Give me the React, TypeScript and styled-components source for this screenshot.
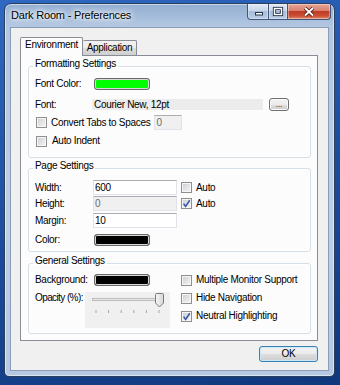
import React from "react";
import styled, { createGlobalStyle } from "styled-components";

const GlobalStyle = createGlobalStyle`
  html, body {
    margin: 0;
    padding: 0;
  }
  body {
    width: 340px;
    height: 385px;
    overflow: hidden;
    font-family: "Liberation Sans", Arial, sans-serif;
    font-size: 10px;
    letter-spacing: -0.3px;
    color: #000;
  }
`;

const Desktop = styled.div`
  width: 340px;
  height: 385px;
  box-sizing: border-box;
  padding: 3px 5px 8px 4px;
  display: flex;
  background: linear-gradient(165deg, #2f68c2 0%, #1d50a1 45%, #0f377c 100%);
`;

const Window = styled.div`
  flex: 1;
  display: flex;
  flex-direction: column;
  border: 1px solid #2b3f5f;
  border-radius: 7px 7px 5px 5px;
  padding: 0 5px 5px;
  overflow: hidden;
  background: linear-gradient(180deg, #93aed2 0px, #b2c7e1 22px, #bdcfe6 60%, #b5c9e2 100%);
  box-shadow: inset 0 0 0 1px rgba(255, 255, 255, 0.5);
`;

const TitleBar = styled.div`
  height: 23px;
  display: flex;
  justify-content: space-between;
  align-items: flex-start;
  margin-right: -2px;
`;

const Title = styled.div`
  padding: 5px 0 0 1px;
  font-size: 11px;
  line-height: 12px;
  letter-spacing: -0.2px;
  color: #000;
  text-shadow: 0 0 6px #fff, 0 0 3px #fff, 0 0 10px #fff;
`;

const CaptionGroup = styled.div`
  display: flex;
  height: 16px;
`;

const CaptionButton = styled.div<{ $w: number; $close?: boolean; $first?: boolean }>`
  width: ${(p) => p.$w}px;
  box-sizing: border-box;
  border: 1px solid #43567a;
  border-top: none;
  border-left: ${(p) => (p.$first ? "1px solid #43567a" : "none")};
  border-radius: ${(p) => (p.$first ? "0 0 0 4px" : p.$close ? "0 0 4px 0" : "0")};
  background: ${(p) =>
    p.$close
      ? "linear-gradient(180deg, #e8a698 0%, #d7806d 45%, #c23b26 50%, #cc4f34 80%, #e0926f 100%)"
      : "linear-gradient(180deg, #e2eaf4 0%, #c7d6e8 45%, #a8bedb 50%, #b9cde6 100%)"};
  box-shadow: inset 0 0 0 1px rgba(255, 255, 255, 0.35);
  svg {
    display: block;
  }
`;

const Client = styled.div`
  flex: 1;
  display: flex;
  flex-direction: column;
  background: #f0f0f0;
  border: 1px solid #8b9cb5;
  padding: 9px 10px 7px 9px;
`;

const TabStrip = styled.div`
  display: flex;
  align-items: flex-end;
  height: 19px;
  margin-bottom: -1px;
  position: relative;
  z-index: 1;
`;

const Tab = styled.div<{ $active?: boolean; $w: number }>`
  width: ${(p) => p.$w}px;
  box-sizing: border-box;
  height: ${(p) => (p.$active ? 19 : 15)}px;
  margin-bottom: ${(p) => (p.$active ? 0 : 1)}px;
  border: 1px solid #898c95;
  border-bottom: none;
  border-left: ${(p) => (p.$active ? "1px solid #898c95" : "none")};
  border-radius: 2px 2px 0 0;
  padding-top: 1px;
  line-height: 12px;
  text-align: center;
  background: ${(p) =>
    p.$active ? "#fcfcfc" : "linear-gradient(180deg, #f2f2f2 0%, #ebebeb 50%, #dddddd 51%, #cfcfcf 100%)"};
`;

const TabPanel = styled.div`
  border: 1px solid #898c95;
  background: #fcfcfc;
  padding: 2px 6px 6px 7px;
`;

const Group = styled.fieldset<{ $mt: number; $pb: number }>`
  margin: ${(p) => p.$mt}px 0 0;
  padding: 0 6px ${(p) => p.$pb}px 6px;
  border: 1px solid #d5dfe5;
  border-radius: 3px;
  box-shadow: inset 0 0 0 1px #ffffff;
  min-width: 0;
`;

const Legend = styled.legend`
  padding: 0 2px 4px;
  margin-left: -2px;
  line-height: 12px;
  font-size: 10px;
`;

const Row = styled.div<{ $h: number; $mt: number }>`
  display: flex;
  align-items: center;
  height: ${(p) => p.$h}px;
  margin-top: ${(p) => p.$mt}px;
`;

const Label = styled.span<{ $w?: number; $ml?: number; $tight?: boolean }>`
  flex: none;
  width: ${(p) => (p.$w ? `${p.$w}px` : "auto")};
  margin-left: ${(p) => p.$ml ?? 0}px;
  line-height: 12px;
  white-space: nowrap;
  letter-spacing: ${(p) => (p.$tight ? "-0.6px" : "inherit")};
`;

const Swatch = styled.div<{ $color: string }>`
  width: 56px;
  height: 12px;
  box-sizing: border-box;
  margin-left: 1px;
  border: 1px solid #6a6a6a;
  border-radius: 3px;
  background: ${(p) => p.$color};
  box-shadow: inset 0 0 0 1px #d8d8d8;
`;

const FontField = styled.div`
  width: 171px;
  height: 11px;
  margin-left: -1px;
  padding-left: 2px;
  box-sizing: border-box;
  background: #ececec;
  line-height: 11px;
`;

const SmallButton = styled.div`
  width: 20px;
  height: 13px;
  margin-left: 6px;
  box-sizing: border-box;
  border: 1px solid #707070;
  border-radius: 3px;
  background: linear-gradient(180deg, #f2f2f2 0%, #ebebeb 50%, #dddddd 51%, #cfcfcf 100%);
  box-shadow: inset 0 0 0 1px #fbfbfb;
  font-size: 8px;
  line-height: 12px;
  text-align: center;
  letter-spacing: 0;
`;

const TextInput = styled.div<{ $w: number; $disabled?: boolean; $ml?: number }>`
  width: ${(p) => p.$w}px;
  height: 15px;
  margin-left: ${(p) => p.$ml ?? 0}px;
  box-sizing: border-box;
  border: 1px solid #e2e3ea;
  border-top-color: #abadb3;
  padding-left: 1px;
  line-height: 13px;
  background: ${(p) => (p.$disabled ? "#f0f0f0" : "#ffffff")};
  color: ${(p) => (p.$disabled ? "#6d6d6d" : "#000")};
`;

const Box = styled.span<{ $ml?: number }>`
  flex: none;
  width: 11px;
  height: 11px;
  box-sizing: border-box;
  margin-left: ${(p) => p.$ml ?? 0}px;
  border: 1px solid #8f8f8f;
  background: linear-gradient(135deg, #c9ccd1 0%, #e6e7e9 60%, #f5f5f5 100%);
  box-shadow: inset 0 0 0 1px #f6f6f6;
  svg {
    display: block;
  }
`;

const Columns = styled.div`
  display: flex;
`;

const Column = styled.div<{ $w?: number; $ml?: number }>`
  width: ${(p) => (p.$w ? `${p.$w}px` : "auto")};
  margin-left: ${(p) => p.$ml ?? 0}px;
  display: flex;
  flex-direction: column;
`;

const TopRow = styled.div<{ $mt: number }>`
  display: flex;
  align-items: flex-start;
  margin-top: ${(p) => p.$mt}px;
`;

const SliderBox = styled.div`
  width: 85px;
  height: 36px;
  background: #f0f0f0;
  svg {
    display: block;
  }
`;

const Footer = styled.div`
  display: flex;
  justify-content: flex-end;
  padding-top: 5px;
`;

const OkButton = styled.div`
  width: 59px;
  height: 16px;
  box-sizing: border-box;
  border: 1px solid #3c7fb1;
  border-radius: 3px;
  background: linear-gradient(180deg, #f2f2f2 0%, #ebebeb 50%, #dddddd 51%, #cfcfcf 100%);
  box-shadow: inset 0 0 0 1px #c9e9f9;
  line-height: 14px;
  text-align: center;
`;

const Check: React.FC<{ checked?: boolean; ml?: number }> = ({ checked, ml }) => (
  <Box $ml={ml}>
    {checked && (
      <svg width="9" height="9" viewBox="0 0 9 9">
        <path d="M1.6 4.6 L3.6 7.4 L7.8 1.2" fill="none" stroke="#3a58a6" strokeWidth="1.6" />
      </svg>
    )}
  </Box>
);

const ticks = [11, 23.6, 36.2, 48.8, 61.4, 74];

const Slider: React.FC = () => (
  <SliderBox>
    <svg width="85" height="36" viewBox="0 0 85 36">
      <defs>
        <linearGradient id="thumb" x1="0" y1="0" x2="1" y2="0">
          <stop offset="0" stopColor="#f6f6f6" />
          <stop offset="1" stopColor="#d6d6d6" />
        </linearGradient>
      </defs>
      <rect x="7.5" y="6.5" width="67" height="2" fill="#e8e8e8" stroke="#bcbcbc" />
      {ticks.map((x) => (
        <line key={x} x1={x} y1="18" x2={x} y2="21" stroke="#a6a6a6" strokeWidth="1" />
      ))}
      <path
        d="M70.5 2.5 Q70.5 1.5 71.5 1.5 H77.5 Q78.5 1.5 78.5 2.5 V11 L74.5 15 L70.5 11 Z"
        fill="url(#thumb)"
        stroke="#7a7a7a"
      />
    </svg>
  </SliderBox>
);

export default function App() {
  return (
    <>
      <GlobalStyle />
      <Desktop>
        <Window>
          <TitleBar>
            <Title>Dark Room - Preferences</Title>
            <CaptionGroup>
              <CaptionButton $w={22} $first>
                <svg width="20" height="15" viewBox="0 0 20 15">
                  <rect x="7.5" y="8.5" width="7" height="2.5" fill="#fff" stroke="#26344d" />
                </svg>
              </CaptionButton>
              <CaptionButton $w={19}>
                <svg width="18" height="15" viewBox="0 0 18 15">
                  <rect x="5.5" y="4.5" width="7" height="6" fill="none" stroke="#26344d" strokeWidth="3.2" />
                  <rect x="5.5" y="4.5" width="7" height="6" fill="none" stroke="#fff" strokeWidth="1.4" />
                </svg>
              </CaptionButton>
              <CaptionButton $w={43} $close>
                <svg width="42" height="15" viewBox="0 0 42 15">
                  <path d="M17 4 L25 11.5 M25 4 L17 11.5" stroke="#4a1c16" strokeWidth="3.6" />
                  <path d="M17 4 L25 11.5 M25 4 L17 11.5" stroke="#fff" strokeWidth="1.8" />
                </svg>
              </CaptionButton>
            </CaptionGroup>
          </TitleBar>
          <Client>
            <TabStrip>
              <Tab $active $w={63}>Environment</Tab>
              <Tab $w={54}>Application</Tab>
            </TabStrip>
            <TabPanel>
              <Group $mt={0} $pb={9}>
                <Legend>Formatting Settings</Legend>
                <Row $h={14} $mt={3}>
                  <Label $w={58}>Font Color:</Label>
                  <Swatch $color="#00ff00" />
                </Row>
                <Row $h={15} $mt={6}>
                  <Label $w={58}>Font:</Label>
                  <FontField>Courier New, 12pt</FontField>
                  <SmallButton>...</SmallButton>
                </Row>
                <Row $h={15} $mt={3}>
                  <Check ml={1} />
                  <Label $ml={4}>Convert Tabs to Spaces</Label>
                  <TextInput $w={28} $ml={4} $disabled>0</TextInput>
                </Row>
                <Row $h={14} $mt={4}>
                  <Check ml={1} />
                  <Label $ml={5}>Auto Indent</Label>
                </Row>
              </Group>

              <Group $mt={2} $pb={5}>
                <Legend>Page Settings</Legend>
                <Row $h={15} $mt={4}>
                  <Label $w={58}>Width:</Label>
                  <TextInput $w={84}>600</TextInput>
                  <Check ml={4} />
                  <Label $ml={4}>Auto</Label>
                </Row>
                <Row $h={15} $mt={1}>
                  <Label $w={58}>Height:</Label>
                  <TextInput $w={84} $disabled>0</TextInput>
                  <Check ml={4} checked />
                  <Label $ml={4}>Auto</Label>
                </Row>
                <Row $h={15} $mt={2}>
                  <Label $w={58}>Margin:</Label>
                  <TextInput $w={84}>10</TextInput>
                </Row>
                <Row $h={12} $mt={6}>
                  <Label $w={58}>Color:</Label>
                  <Swatch $color="#000000" />
                </Row>
              </Group>

              <Group $mt={3} $pb={5}>
                <Legend>General Settings</Legend>
                <Columns>
                  <Column $w={135}>
                    <Row $h={14} $mt={2}>
                      <Label $w={58}>Background:</Label>
                      <Swatch $color="#000000" />
                    </Row>
                    <TopRow $mt={5}>
                      <Label $w={50} $tight>Opacity (%):</Label>
                      <Slider />
                    </TopRow>
                  </Column>
                  <Column $ml={11}>
                    <Row $h={14} $mt={2}>
                      <Check />
                      <Label $ml={4}>Multiple Monitor Support</Label>
                    </Row>
                    <Row $h={14} $mt={4}>
                      <Check />
                      <Label $ml={4}>Hide Navigation</Label>
                    </Row>
                    <Row $h={14} $mt={4}>
                      <Check checked />
                      <Label $ml={4}>Neutral Highlighting</Label>
                    </Row>
                  </Column>
                </Columns>
              </Group>
            </TabPanel>
            <Footer>
              <OkButton>OK</OkButton>
            </Footer>
          </Client>
        </Window>
      </Desktop>
    </>
  );
}
